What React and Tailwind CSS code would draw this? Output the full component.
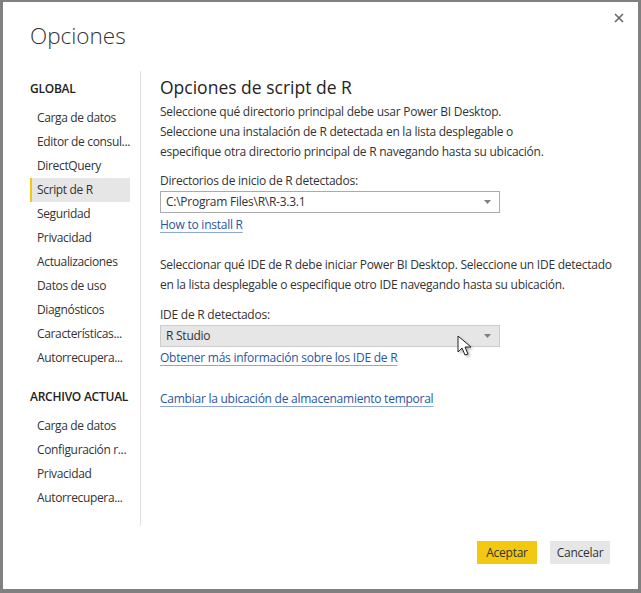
import { useState } from "react";

const globalItems = [
  "Carga de datos",
  "Editor de consul...",
  "DirectQuery",
  "Script de R",
  "Seguridad",
  "Privacidad",
  "Actualizaciones",
  "Datos de uso",
  "Diagnósticos",
  "Características...",
  "Autorrecupera...",
];

const fileItems = ["Carga de datos", "Configuración r...", "Privacidad", "Autorrecupera..."];

const NavItem = ({ label, active, onClick }) => (
  <button
    type="button"
    onClick={onClick}
    className={`flex h-6 w-full items-center whitespace-nowrap border-l-[2px] pl-[5px] text-left tracking-[-0.35px] text-[#333] ${
      active ? "border-[#f2c811] bg-[#e6e6e6]" : "border-transparent"
    }`}
  >
    {label}
  </button>
);

const Caret = () => (
  <svg width="7" height="4" viewBox="0 0 7 4" className="fill-[#808080]">
    <path d="M0 0h7L3.5 4z" />
  </svg>
);

const Cursor = () => (
  <svg width="20" height="26" viewBox="0 0 20 26" className="absolute left-[453px] top-[332px]">
    <defs>
      <filter id="sh" x="-50%" y="-50%" width="200%" height="200%">
        <feGaussianBlur stdDeviation="1.5" />
      </filter>
    </defs>
    <path d="M4 4v16l4-4 3 7 3-1-3-7h6z" fill="#000" opacity="0.35" filter="url(#sh)" />
    <path d="M2 2v16l4-4 3 7 3-1-3-7h6z" fill="#fff" stroke="#222" strokeWidth="1" strokeLinejoin="round" />
  </svg>
);

const linkClass =
  "block w-fit whitespace-nowrap leading-5 text-[#2a55a3] underline decoration-[#8ea7d8] underline-offset-[3px]";

export default function App() {
  const [active, setActive] = useState("Script de R");

  return (
    <div
      className="relative h-[593px] w-[641px] border-b-[4px] border-l-[3px] border-r-[3px] border-t-[2px] border-[#808080] bg-white text-[12px] tracking-[-0.25px] text-[#333]"
      style={{ fontFamily: "'Open Sans', 'Noto Sans', sans-serif" }}
    >
      <button type="button" className="absolute right-[10px] top-[7px] p-1 text-[#666]">
        <svg width="10" height="10" viewBox="0 0 10 10" stroke="currentColor" strokeWidth="1.6">
          <path d="M1 1l8 8M9 1l-8 8" />
        </svg>
      </button>

      <h1 className="pl-[27px] pt-[18px] text-[22.5px] font-light leading-8 tracking-normal text-[#333]">Opciones</h1>

      <div className="mt-[19px] flex h-[455px]">
        <nav className="ml-[27px] w-[100px] pt-[6px]">
          <div className="flex h-6 items-center font-semibold text-[#222]">GLOBAL</div>
          <div className="mt-[5px]">
            {globalItems.map((item) => (
              <NavItem key={item} label={item} active={active === item} onClick={() => setActive(item)} />
            ))}
          </div>
          <div className="mt-[15px] flex h-6 items-center whitespace-nowrap font-semibold text-[#222]">
            ARCHIVO ACTUAL
          </div>
          <div className="mt-[5px]">
            {fileItems.map((item) => (
              <NavItem key={`f-${item}`} label={item} active={false} onClick={() => {}} />
            ))}
          </div>
        </nav>

        <div className="ml-[10px] w-px bg-[#e1e1e1]" />

        <main className="whitespace-nowrap pl-[19px] pt-[4px]">
          <h2 className="text-[17.5px] leading-6 tracking-normal text-[#252423]">Opciones de script de R</h2>
          <p className="mt-[3px] leading-5">
            Seleccione qué directorio principal debe usar Power BI Desktop.
            <br />
            Seleccione una instalación de R detectada en la lista desplegable o
            <br />
            especifique otra directorio principal de R navegando hasta su ubicación.
          </p>

          <div className="mt-[9px] leading-5">Directorios de inicio de R detectados:</div>
          <div className="flex h-[22px] w-[340px] items-center justify-between border border-[#ababab] pl-[5px] pr-[8px]">
            <span>C:\Program Files\R\R-3.3.1</span>
            <Caret />
          </div>
          <a href="#" className={`${linkClass} mt-[2px]`}>
            How to install R
          </a>

          <p className="mt-[20px] leading-5">
            Seleccionar qué IDE de R debe iniciar Power BI Desktop. Seleccione un IDE detectado
            <br />
            en la lista desplegable o especifique otro IDE navegando hasta su ubicación.
          </p>

          <div className="mt-[10px] leading-5">IDE de R detectados:</div>
          <div className="flex h-[22px] w-[340px] items-center justify-between border border-[#cccccc] bg-[#e6e6e6] pl-[5px] pr-[8px]">
            <span>R Studio</span>
            <Caret />
          </div>
          <a href="#" className={`${linkClass} mt-[1px]`}>
            Obtener más información sobre los IDE de R
          </a>

          <a href="#" className={`${linkClass} mt-[21px]`}>
            Cambiar la ubicación de almacenamiento temporal
          </a>
        </main>
      </div>

      <div className="mt-[15px] flex justify-end gap-[13px] pr-[28px]">
        <button type="button" className="h-[23px] w-[60px] bg-[#f2c811] text-[#333]">
          Aceptar
        </button>
        <button type="button" className="h-[23px] w-[60px] bg-[#e6e6e6] text-[#333]">
          Cancelar
        </button>
      </div>

      <Cursor />
    </div>
  );
}
